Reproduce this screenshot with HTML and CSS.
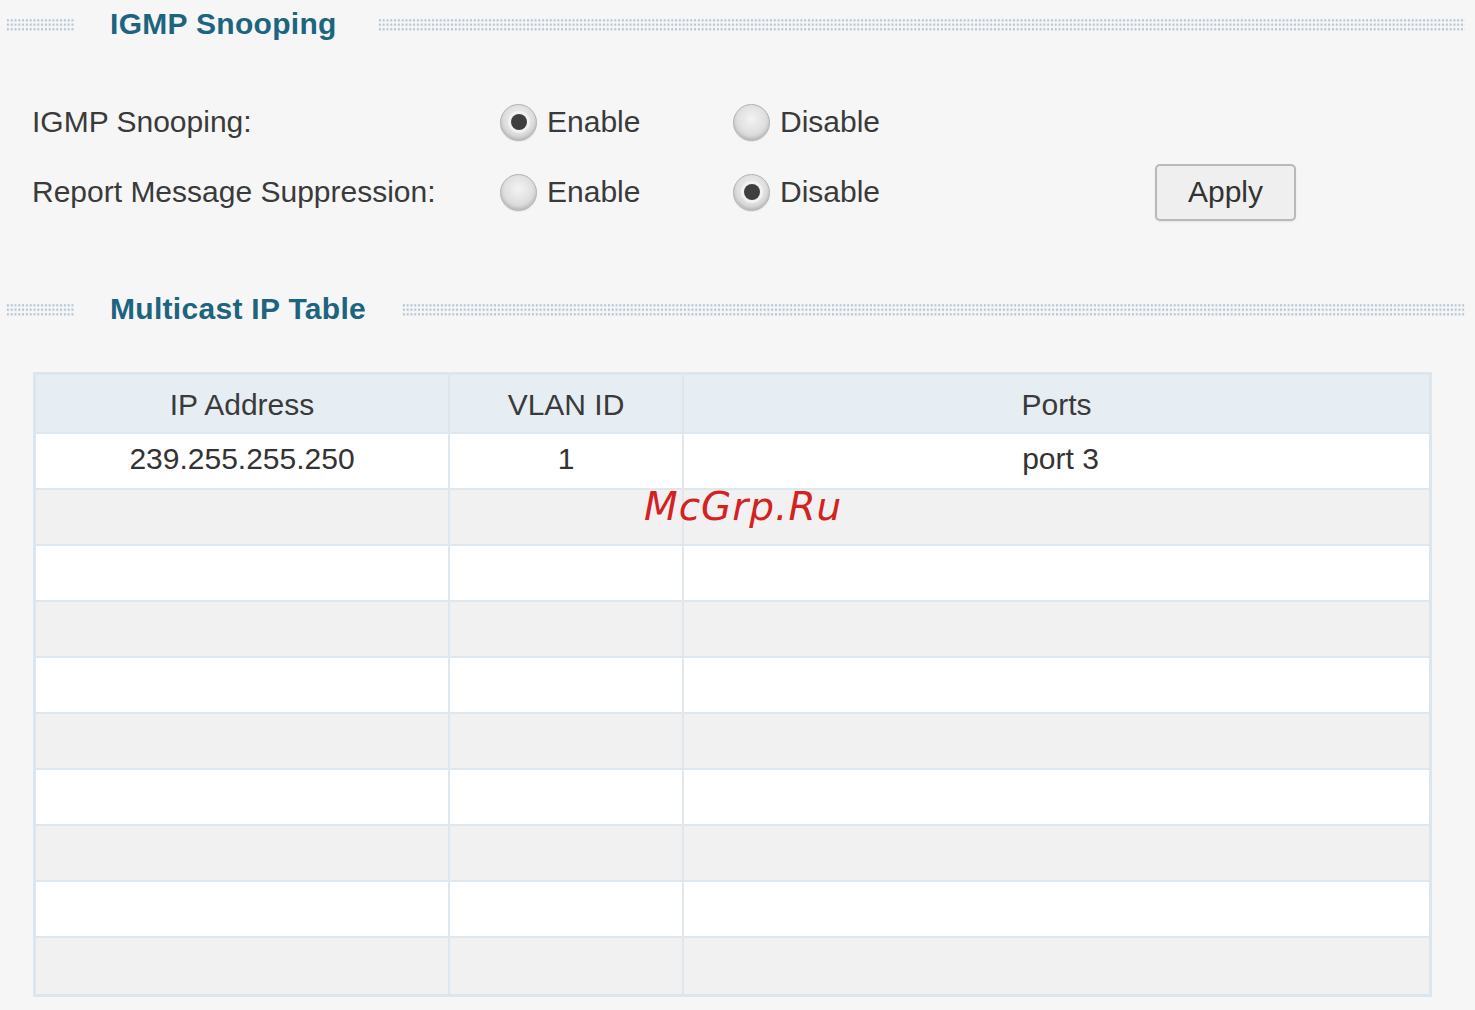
FILE: index.html
```html
<!DOCTYPE html>
<html>
<head>
<meta charset="utf-8">
<link rel="stylesheet" href="styles.css">
</head>
<body>
<div class="page">
  <div class="section-head">
    <div class="dots dots-left"></div>
    <h2 class="section-title">IGMP Snooping</h2>
    <div class="dots dots-right"></div>
  </div>

  <div class="form">
    <div class="form-row">
      <div class="label">IGMP Snooping:</div>
      <div class="option"><span class="radio checked"></span><span class="opt-text">Enable</span></div>
      <div class="option"><span class="radio"></span><span class="opt-text">Disable</span></div>
    </div>
    <div class="form-row">
      <div class="label">Report Message Suppression:</div>
      <div class="option"><span class="radio"></span><span class="opt-text">Enable</span></div>
      <div class="option"><span class="radio checked"></span><span class="opt-text">Disable</span></div>
      <button class="apply">Apply</button>
    </div>
  </div>

  <div class="section-head second">
    <div class="dots dots-left"></div>
    <h2 class="section-title">Multicast IP Table</h2>
    <div class="dots dots-right dots-right2"></div>
  </div>

  <table class="ip-table">
    <thead>
      <tr>
        <th class="c1">IP Address</th>
        <th class="c2">VLAN ID</th>
        <th class="c3">Ports</th>
      </tr>
    </thead>
    <tbody>
      <tr><td class="c1">239.255.255.250</td><td class="c2">1</td><td class="c3 port">port 3</td></tr>
      <tr><td class="c1"></td><td class="c2"></td><td class="c3"></td></tr>
      <tr><td class="c1"></td><td class="c2"></td><td class="c3"></td></tr>
      <tr><td class="c1"></td><td class="c2"></td><td class="c3"></td></tr>
      <tr><td class="c1"></td><td class="c2"></td><td class="c3"></td></tr>
      <tr><td class="c1"></td><td class="c2"></td><td class="c3"></td></tr>
      <tr><td class="c1"></td><td class="c2"></td><td class="c3"></td></tr>
      <tr><td class="c1"></td><td class="c2"></td><td class="c3"></td></tr>
      <tr><td class="c1"></td><td class="c2"></td><td class="c3"></td></tr>
      <tr><td class="c1"></td><td class="c2"></td><td class="c3"></td></tr>
    </tbody>
  </table>

  <div class="watermark">McGrp.Ru</div>
</div>
</body>
</html>
```

FILE: styles.css
```css
* { box-sizing: border-box; }

html, body {
  margin: 0;
  padding: 0;
  background: #f6f6f6;
}

body {
  font-family: "Liberation Sans", Arial, sans-serif;
  color: #333;
  font-size: 30px;
  width: 1475px;
  height: 1010px;
  overflow: hidden;
}

.page {
  position: relative;
  height: 1010px;
}

.section-head {
  display: flex;
  align-items: center;
  height: 48px;
  padding-left: 6px;
  padding-right: 10px;
}

.section-head.second {
  margin-top: 63px;
}

.dots {
  height: 13px;
  background-image:
    radial-gradient(circle at center, #9fb6cb 0, #9fb6cb 0.8px, rgba(159,182,203,0) 1.5px);
  background-size: 3.8px 4.5px;
  opacity: 0.8;
}

.dots-left {
  width: 69px;
  margin-right: 35px;
}

.dots-right {
  flex: 1;
  margin-left: 41px;
}

.dots-right2 {
  margin-left: 36px;
}

.section-title {
  margin: 0;
  font-size: 30px;
  font-weight: bold;
  letter-spacing: 0.3px;
  color: #1d6480;
  line-height: 48px;
  white-space: nowrap;
}

.form {
  padding-top: 44px;
  padding-left: 32px;
}

.form-row {
  display: flex;
  align-items: center;
  height: 60px;
  margin-bottom: 10px;
}

.label {
  width: 468px;
  color: #3a3a3a;
}

.option {
  display: flex;
  align-items: center;
  width: 233px;
}

.option + .option {
  width: 422px;
}

.radio {
  position: relative;
  display: inline-block;
  width: 37px;
  height: 37px;
  border-radius: 50%;
  border: 1px solid #b3b3b3;
  background: radial-gradient(circle at 50% 40%, #f3f3f3 0%, #e2e2e2 45%, #c4c4c4 100%);
  box-shadow: inset 0 -2px 3px rgba(0,0,0,0.12), 0 1px 1px rgba(0,0,0,0.08);
  margin-right: 10px;
  flex: none;
}

.radio.checked::after {
  content: "";
  position: absolute;
  left: 50%;
  top: 50%;
  width: 16px;
  height: 16px;
  margin: -8px 0 0 -8px;
  border-radius: 50%;
  background: #3f3f3f;
  box-shadow: 0 0 0 3px #f2f2f2;
}

.opt-text {
  color: #3a3a3a;
}

.apply {
  width: 141px;
  height: 57px;
  font-family: "Liberation Sans", Arial, sans-serif;
  font-size: 30px;
  color: #333;
  background: #efefef;
  border: 2px solid #b9b9b9;
  border-radius: 5px;
  box-shadow: 0 1px 2px rgba(0,0,0,0.08);
  padding: 0;
}

.ip-table {
  margin-top: 39px;
  margin-left: 33px;
  width: 1399px;
  border: 3px solid #dce6ee;
  border-spacing: 0;
  border-collapse: separate;
  background: #fff;
}

.ip-table th,
.ip-table td {
  padding: 0;
  text-align: center;
  font-weight: normal;
  font-size: 30px;
  color: #333;
  border-right: 2px solid #dfe7ee;
  border-bottom: 2px solid #dfe7ee;
}

.ip-table th {
  height: 59px;
  background: #e6edf3;
  color: #3a3a3a;
  padding-top: 2px;
}

.ip-table td {
  height: 56px;
  padding-bottom: 5px;
}

.ip-table .c1 { width: 414px; }
.ip-table .c2 { width: 234px; }
.ip-table .c3 { border-right: none; }
.ip-table .port { padding-left: 8px; }

.ip-table tbody tr:nth-child(even) td {
  background: #f1f1f1;
}

.ip-table tbody tr:last-child td {
  border-bottom: none;
}

.watermark {
  position: absolute;
  left: 644px;
  top: 484px;
  font-family: "DejaVu Sans", sans-serif;
  font-style: italic;
  font-size: 39px;
  letter-spacing: 1px;
  color: #d42121;
}
```
